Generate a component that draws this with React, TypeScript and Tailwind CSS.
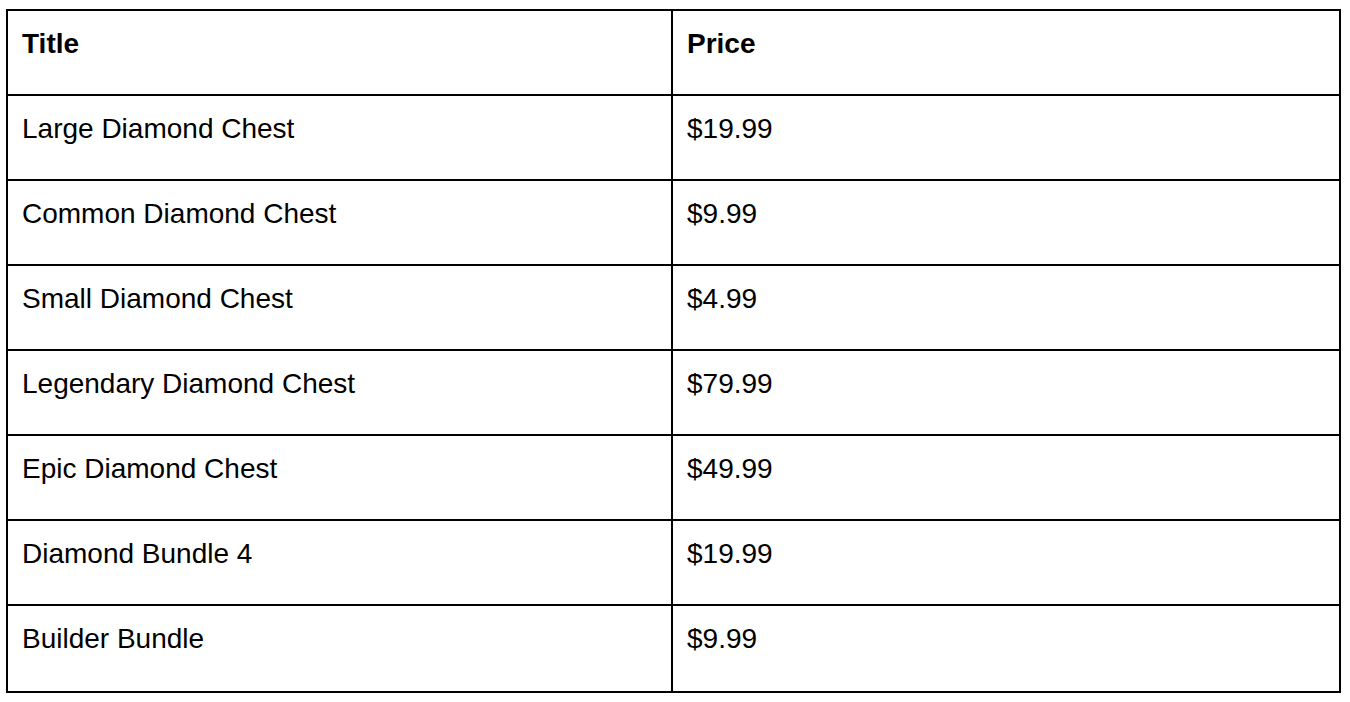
const rows: { title: string; price: string }[] = [
  { title: "Large Diamond Chest", price: "$19.99" },
  { title: "Common Diamond Chest", price: "$9.99" },
  { title: "Small Diamond Chest", price: "$4.99" },
  { title: "Legendary Diamond Chest", price: "$79.99" },
  { title: "Epic Diamond Chest", price: "$49.99" },
  { title: "Diamond Bundle 4", price: "$19.99" },
  { title: "Builder Bundle", price: "$9.99" },
];

const cell = "px-[14px] pt-[17px] text-[28px] leading-[32px]";

export default function App(): React.ReactElement {
  return (
    <div className="min-h-screen bg-white pl-[6px] pt-[9px] font-['Liberation_Sans',Arial,sans-serif] text-black">
      <div className="w-[1335px] border-2 border-black">
        <div className="flex h-[83px]">
          <div className={`${cell} w-[665px] border-r-2 border-black font-bold`}>Title</div>
          <div className={`${cell} flex-1 font-bold`}>Price</div>
        </div>
        {rows.map((r, i) => (
          <div
            key={i}
            className={`flex border-t-2 border-black ${i === rows.length - 1 ? "h-[87px]" : "h-[85px]"}`}
          >
            <div className={`${cell} w-[665px] border-r-2 border-black`}>{r.title}</div>
            <div className={`${cell} flex-1`}>{r.price}</div>
          </div>
        ))}
      </div>
    </div>
  );
}
